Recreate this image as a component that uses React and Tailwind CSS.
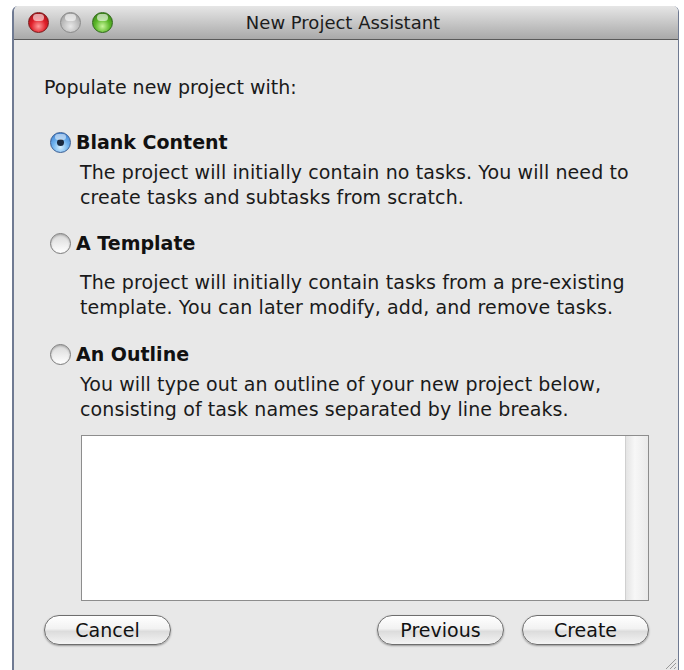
import { useState } from 'react'

const font = { fontFamily: '"DejaVu Sans", "Liberation Sans", sans-serif' }

function Light({ color }) {
  const fills = {
    red: 'bg-[radial-gradient(circle_at_50%_70%,#ff9a9a_0%,#e0202a_45%,#8c0a10_100%)] border-[#7a1a1a]',
    gray: 'bg-[radial-gradient(circle_at_50%_70%,#e8e8e8_0%,#bdbdbd_50%,#8e8e8e_100%)] border-[#8a8a8a]',
    green: 'bg-[radial-gradient(circle_at_50%_70%,#c8f59a_0%,#5cb82a_45%,#2d6a10_100%)] border-[#2f6a1a]',
  }
  return (
    <div className={`relative w-[21px] h-[21px] rounded-full border ${fills[color]}`}>
      <div className="absolute left-[4px] top-[1px] w-[11px] h-[7px] rounded-full bg-white/60" />
    </div>
  )
}

function Radio({ checked, onClick }) {
  if (checked) {
    return (
      <button onClick={onClick} className="relative w-[21px] h-[21px] rounded-full border border-[#3b5f94] bg-[radial-gradient(circle_at_50%_75%,#d6f0ff_0%,#6eb2ee_45%,#2f6fc4_100%)] flex items-center justify-center shrink-0">
        <div className="absolute left-[4px] top-[1px] w-[11px] h-[6px] rounded-full bg-white/50" />
        <div className="w-[7px] h-[7px] rounded-full bg-[#1a2a40]" />
      </button>
    )
  }
  return (
    <button onClick={onClick} className="w-[21px] h-[21px] rounded-full border border-[#7c7c7c] bg-[linear-gradient(#d8d8d8,#ffffff)] shadow-[inset_0_1px_2px_rgba(0,0,0,0.25)] shrink-0" />
  )
}

function PillButton({ children }) {
  return (
    <button className="w-[127px] h-[30px] rounded-full border border-[#6e6e6e] bg-[linear-gradient(#ffffff_0%,#f2f2f2_45%,#dcdcdc_55%,#f4f4f4_100%)] shadow-[0_1px_2px_rgba(0,0,0,0.35)] text-[19px] leading-[28px] text-[#111]">
      {children}
    </button>
  )
}

// spacing above each option and between label and description
const options = [
  {
    id: 'blank',
    label: 'Blank Content',
    top: 'mt-[31px]',
    gap: 'mt-[6px]',
    text: ['The project will initially contain no tasks. You will need to', 'create tasks and subtasks from scratch.'],
  },
  {
    id: 'template',
    label: 'A Template',
    top: 'mt-[21px]',
    gap: 'mt-[15px]',
    text: ['The project will initially contain tasks from a pre-existing', 'template. You can later modify, add, and remove tasks.'],
  },
  {
    id: 'outline',
    label: 'An Outline',
    top: 'mt-[22px]',
    gap: 'mt-[6px]',
    text: ['You will type out an outline of your new project below,', 'consisting of task names separated by line breaks.'],
  },
]

export default function App() {
  const [choice, setChoice] = useState('blank')

  return (
    <div className="w-[684px] h-[670px] bg-white overflow-hidden pt-[6px] pl-[12px]" style={font}>
      <div className="w-[667px] h-[664px] flex flex-col border-l-2 border-r border-[#6f7a92] rounded-t-[6px] overflow-hidden">
        {/* title bar */}
        <div className="relative h-[34px] shrink-0 bg-[linear-gradient(#e6e6e6,#a9a9a9)] border-b border-[#5a5a5a] flex items-center justify-center">
          <div className="absolute left-[14px] top-[6px] flex gap-[11px]">
            <Light color="red" />
            <Light color="gray" />
            <Light color="green" />
          </div>
          <span className="text-[18px] text-[#1c1c1c] -ml-[6px]">New Project Assistant</span>
        </div>

        {/* body */}
        <div className="flex-1 bg-[#e8e8e8] flex flex-col pl-[30px] pr-[29px]">
          <p className="mt-[35px] text-[19px] text-[#1a1a1a] leading-[24px]">Populate new project with:</p>

          {options.map(o => (
            <div key={o.id} className={o.top}>
              <div className="flex items-center gap-[5px] ml-[6px]">
                <Radio checked={choice === o.id} onClick={() => setChoice(o.id)} />
                <span className="text-[19px] font-bold text-[#111] leading-[24px]">{o.label}</span>
              </div>
              <div className={`ml-[36px] ${o.gap} text-[19px] text-[#1a1a1a] leading-[25px] tracking-[0.1px]`}>
                {o.text.map(t => <div key={t}>{t}</div>)}
              </div>
            </div>
          ))}

          {/* outline field with scroll track */}
          <div className="mt-[13px] ml-[37px] h-[166px] border border-[#8d8d8d] bg-white flex">
            <textarea className="flex-1 resize-none outline-none p-1 text-[16px]" />
            <div className="w-[23px] bg-[linear-gradient(90deg,#e4e4e4,#f7f7f7_40%,#eaeaea)] border-l border-[#d0d0d0]" />
          </div>

          <div className="mt-[14px] flex items-center">
            <PillButton>Cancel</PillButton>
            <div className="flex-1" />
            <PillButton>Previous</PillButton>
            <div className="w-[18px]" />
            <PillButton>Create</PillButton>
          </div>

          <div className="flex-1 relative">
            <svg className="absolute right-[-28px] bottom-[0px]" width="14" height="14" viewBox="0 0 14 14">
              <path d="M13 3 L3 13 M13 7 L7 13 M13 11 L11 13" stroke="#9a9a9a" strokeWidth="1" />
            </svg>
          </div>
        </div>
      </div>
    </div>
  )
}
